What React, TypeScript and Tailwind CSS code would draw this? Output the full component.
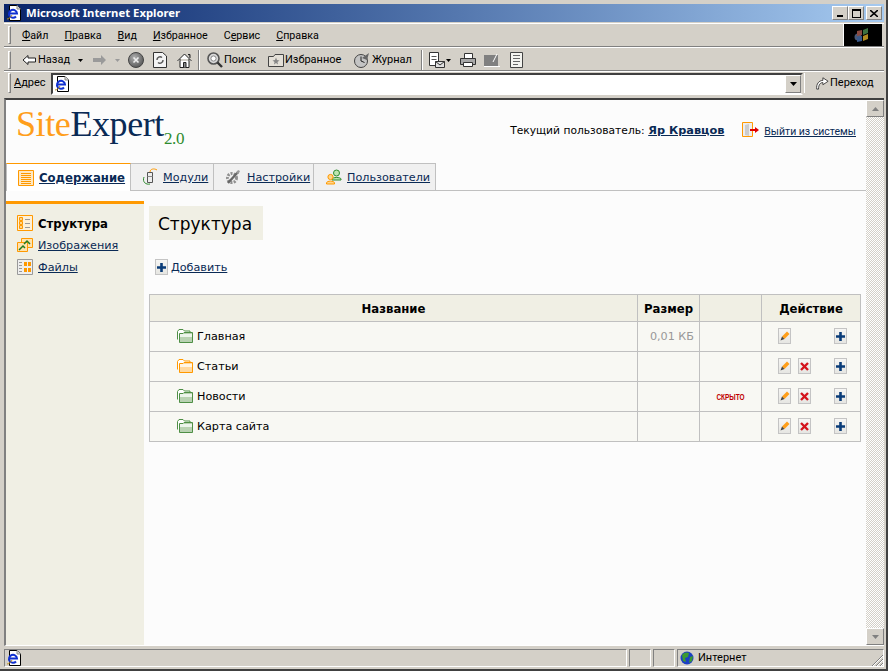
import type { ReactNode } from "react";

const ui = "font-['Roboto',sans-serif] text-[11px] leading-[14px] text-black";
const page = "font-['DejaVu_Sans',sans-serif]";

const raised = "border border-t-white border-l-white border-r-[#808080] border-b-[#808080]";
const sunken = "border border-t-[#808080] border-l-[#808080] border-r-white border-b-white";

function IeDoc({ className = "" }: { className?: string }) {
  return (
    <svg viewBox="0 0 16 16" width="16" height="16" className={className}>
      <path d="M3.5 .5H11L14.5 4V15.5H3.5Z" fill="#fff" stroke="#000" />
      <path d="M11 .5V4H14.5" fill="#ddd" stroke="#888" />
      <path d="M3 8.5H11A4 4 0 1 0 10 11.5" fill="none" stroke="#1030d0" strokeWidth="2" />
      <path d="M1 14C3 14 5 12 6 10" fill="none" stroke="#c09020" strokeWidth="1" />
    </svg>
  );
}

function Grip() {
  return <div className={`mr-[8px] h-full w-[3px] shrink-0 ${raised}`} />;
}

function Underlined({ text, at }: { text: string; at: number }) {
  return (
    <>
      {text.slice(0, at)}
      <span className="underline">{text[at]}</span>
      {text.slice(at + 1)}
    </>
  );
}

function MenuBar() {
  const items = [
    ["Файл", 0],
    ["Правка", 0],
    ["Вид", 0],
    ["Избранное", 0],
    ["Сервис", 1],
    ["Справка", 0],
  ] as const;
  return (
    <div className="flex h-[24px] items-stretch border-b border-b-[#808080] border-t border-t-white pr-[2px]">
      <div className="flex flex-1 items-center py-[2px] pl-[4px]">
        <Grip />
        <div className="ml-[3px] mt-[2px] flex gap-[16px]">
          {items.map(([label, at]) => (
            <span key={label} className="font-['Roboto',sans-serif] text-[10.7px] leading-[14px] text-black">
              <Underlined text={label} at={at} />
            </span>
          ))}
        </div>
      </div>
      <div className="flex w-[39px] items-center justify-center border-l border-l-white bg-black">
        <svg viewBox="0 0 18 16" width="18" height="16">
          <circle cx="4" cy="10" r="3.5" fill="#4a5a78" />
          <path d="M3 4L8 3V8L3 9Z" fill="#8a4a40" />
          <path d="M9 3L14 1V6L9 8Z" fill="#3c7040" />
          <path d="M3 10L8 9V14L3 15Z" fill="#38588a" />
          <path d="M9 9L14 7V12L9 14Z" fill="#b08a20" />
        </svg>
      </div>
    </div>
  );
}

function ToolSep({ className = "" }: { className?: string }) {
  return <div className={`h-[20px] w-[2px] shrink-0 border-l border-l-[#808080] border-r border-r-white ${className}`} />;
}

function Caret({ color = "#000", className = "" }: { color?: string; className?: string }) {
  return (
    <svg viewBox="0 0 5 3" width="5" height="3" className={`shrink-0 ${className}`}>
      <path d="M0 0H5L2.5 3Z" fill={color} />
    </svg>
  );
}

function ToolBar() {
  return (
    <div className="flex h-[24px] items-center border-b border-b-[#808080] border-t border-t-white pb-[1px] pl-[4px] pt-[3px]">
      <Grip />
      <svg viewBox="0 0 14 12" width="14" height="12" className="ml-[3px] shrink-0">
        <path d="M1 6L6 1.5V4H13.5V8H6V10.5Z" fill="#fff" stroke="#222" />
      </svg>
      <span className={`${ui} ml-[2px] w-[31px]`}>Назад</span>
      <Caret className="ml-[9px]" />
      <svg viewBox="0 0 13 12" width="13" height="12" className="ml-[10px] shrink-0">
        <path d="M13 6L8 1V4H0V8H8V11Z" fill="#9a9a9a" />
      </svg>
      <Caret color="#9a9a9a" className="ml-[9px]" />
      <svg viewBox="0 0 16 16" width="16" height="16" className="ml-[8px] shrink-0">
        <defs>
          <radialGradient id="stopFill" cx="40%" cy="35%" r="70%">
            <stop offset="0%" stopColor="#b0b0b0" />
            <stop offset="100%" stopColor="#555" />
          </radialGradient>
        </defs>
        <circle cx="8" cy="8" r="7.5" fill="url(#stopFill)" stroke="#444" />
        <path d="M5.5 5.5L10.5 10.5M10.5 5.5L5.5 10.5" stroke="#eee" strokeWidth="1.6" />
      </svg>
      <svg viewBox="0 0 14 16" width="14" height="16" className="ml-[9px] shrink-0">
        <path d="M.5 .5H9.5L13.5 4V15.5H.5Z" fill="#f4f4f4" stroke="#333" />
        <path d="M4 8A3 3 0 0 1 9 5.5M10 8A3 3 0 0 1 5 10.5" fill="none" stroke="#555" strokeWidth="1.4" />
      </svg>
      <svg viewBox="0 0 15 15" width="15" height="15" className="ml-[10px] shrink-0">
        <path d="M.5 8L7.5 1L14.5 8M3 6V14.5H12V6" fill="#fff" stroke="#222" />
        <path d="M6.5 14.5V9.5H9V14.5" fill="#888" stroke="#222" />
        <path d="M11 1.5H13V5" fill="#888" stroke="#222" />
      </svg>
      <ToolSep className="ml-[6px]" />
      <svg viewBox="0 0 16 16" width="16" height="16" className="ml-[7px] shrink-0">
        <circle cx="6.5" cy="6.5" r="5.5" fill="#d8d8d8" stroke="#555" strokeWidth="1.6" />
        <circle cx="6.5" cy="6.5" r="2.6" fill="#fff" stroke="#888" />
        <path d="M10.5 10.5L15 15" stroke="#333" strokeWidth="2.4" />
      </svg>
      <span className={`${ui} ml-[1px] w-[31px]`}>Поиск</span>
      <svg viewBox="0 0 16 14" width="16" height="14" className="ml-[13px] shrink-0">
        <path d="M.5 3.5V13.5H15.5V1.5H7L5.5 3.5Z" fill="#e4e0d8" stroke="#444" />
        <path d="M8 4.5L9 7L11.5 7.5L9.5 9L10 11.5L8 10L6 11.5L6.5 9L4.5 7.5L7 7Z" fill="#888" />
      </svg>
      <span className={`${ui} ml-[1px] w-[55px]`}>Избранное</span>
      <svg viewBox="0 0 18 16" width="18" height="16" className="ml-[13px] shrink-0">
        <circle cx="8" cy="9" r="6.5" fill="#c4c4c4" stroke="#444" />
        <path d="M8 4.5V9L11.5 10.5" fill="none" stroke="#222" />
        <path d="M9 6L16 1L14 8Z" fill="#666" />
      </svg>
      <span className={`${ui} ml-[1px] w-[39px]`}>Журнал</span>
      <ToolSep className="ml-[10px]" />
      <svg viewBox="0 0 16 16" width="16" height="16" className="ml-[6px] shrink-0">
        <path d="M.5 .5H9.5V13.5H.5Z" fill="#fff" stroke="#333" />
        <path d="M2.5 4.5H7.5M2.5 7.5H7.5" stroke="#555" />
        <path d="M6.5 9.5H15.5V15.5H6.5Z" fill="#e0e0e0" stroke="#333" />
        <path d="M6.5 9.5L11 13L15.5 9.5" fill="none" stroke="#333" />
      </svg>
      <Caret className="ml-[1px]" />
      <svg viewBox="0 0 16 16" width="16" height="16" className="ml-[9px] shrink-0">
        <path d="M4.5 6V1.5H12.5V6" fill="#fff" stroke="#333" />
        <path d="M.5 6.5H15.5V12.5H.5Z" fill="#a8a8a8" stroke="#333" />
        <path d="M3.5 10.5H12.5V14.5H3.5Z" fill="#fff" stroke="#333" />
      </svg>
      <svg viewBox="0 0 16 14" width="16" height="14" className="ml-[8px] shrink-0">
        <path d="M0 2H14V14H0Z" fill="#808080" />
        <path d="M0 13H16V14H0Z" fill="#fff" />
        <path d="M9 9L13 1" stroke="#fff" />
      </svg>
      <svg viewBox="0 0 15 16" width="15" height="16" className="ml-[9px] shrink-0">
        <path d="M1.5 .5H13.5V15.5H1.5Z" fill="#f4f4f0" stroke="#444" />
        <path d="M4 3.5H11M4 6.5H11M4 9.5H11M4 12.5H9" stroke="#666" />
      </svg>
    </div>
  );
}

function AddressBar() {
  return (
    <div className="flex h-[27px] items-start border-t border-t-white pl-[4px]">
      <div className="mt-[1px] h-[20px]"><Grip /></div>
      <span className={`${ui} -ml-[5px] mt-[4px] w-[32px]`}>
        <Underlined text="Адрес" at={0} />
      </span>
      <div className="ml-[5px] mt-[1px] flex h-[22px] flex-1 items-center border-2 border-t-[#404040] border-l-[#404040] border-r-[#d4d0c8] border-b-white bg-white">
        <IeDoc className="ml-[1px]" />
        <div className="flex-1" />
        <div className={`flex h-[18px] w-[16px] items-center justify-center bg-[#d4d0c8] ${raised}`}>
          <svg viewBox="0 0 7 4" width="7" height="4"><path d="M0 0H7L3.5 4Z" fill="#000" /></svg>
        </div>
      </div>
      <div className="ml-[1px] mt-[1px] flex h-[20px] w-[80px] items-center gap-[1px] border-l border-l-white pl-[10px]">
        <svg viewBox="0 0 16 16" width="14" height="16" className="shrink-0">
          <path d="M2 15C1 9 5 5 9 5V2L15 6L9 10V7.5C6 7.5 4 10 4 15Z" fill="#fff" stroke="#333" />
        </svg>
        <span className={ui}>Переход</span>
      </div>
    </div>
  );
}

function ListIcon() {
  return (
    <svg viewBox="0 0 16 16" width="16" height="16" className="shrink-0">
      <path d="M.5 .5H15.5V15.5H.5Z" fill="#ffe9c4" stroke="#ff9900" />
      <path d="M3 3.5H13M3 5.5H13M3 7.5H13M3 9.5H13M3 11.5H13M3 13.5H13" stroke="#ff9900" />
    </svg>
  );
}

function PlugIcon() {
  return (
    <svg viewBox="0 0 16 18" width="16" height="18" className="shrink-0">
      <path d="M5.5 4.5H10.5V14.5H5.5Z" fill="#eee" stroke="#555" />
      <path d="M5.5 8.5H10.5" stroke="#888" />
      <path d="M8 4C8 1 12 0 15 2" fill="none" stroke="#ff9900" />
      <path d="M2 9C0 14 4 17 8 16" fill="none" stroke="#2e8b2e" />
    </svg>
  );
}

function GearIcon() {
  return (
    <svg viewBox="0 0 16 16" width="16" height="16" className="shrink-0">
      <circle cx="7" cy="9" r="4.5" fill="none" stroke="#909090" strokeWidth="3" strokeDasharray="2 1.2" />
      <path d="M3 14L13 3" stroke="#666" strokeWidth="2.4" />
      <path d="M11 4L13 1L15 2L13.5 5Z" fill="#999" />
    </svg>
  );
}

function UsersIcon() {
  return (
    <svg viewBox="0 0 16 16" width="16" height="16" className="shrink-0">
      <circle cx="10.5" cy="4" r="3" fill="#bfe6b0" stroke="#2e8b2e" />
      <path d="M6 10C6 8 15 8 15 10V11H6Z" fill="#bfe6b0" stroke="#2e8b2e" />
      <circle cx="4.5" cy="8" r="2.6" fill="#ffd58a" stroke="#ff9900" />
      <path d="M.5 14C.5 11.5 8.5 11.5 8.5 14V15H.5Z" fill="#ffd58a" stroke="#ff9900" />
    </svg>
  );
}

function TreeIcon() {
  return (
    <svg viewBox="0 0 16 16" width="16" height="16" className="shrink-0">
      <path d="M.5 .5H15.5V15.5H.5Z" fill="#fdf0d8" stroke="#ff9900" />
      <path d="M2.5 2.5H5.5V5.5H2.5ZM2.5 6.5H5.5V9.5H2.5ZM2.5 10.5H5.5V13.5H2.5Z" fill="#ffd58a" stroke="#ff9900" />
      <path d="M8 4.5H13M8 8.5H13M8 12.5H13" stroke="#999" />
    </svg>
  );
}

function ImagesIcon() {
  return (
    <svg viewBox="0 0 16 14" width="16" height="14" className="shrink-0">
      <path d="M4.5 .5H15.5V9.5H4.5Z" fill="#ffe2ac" stroke="#ff9900" />
      <path d="M.5 4.5H10.5V13.5H.5Z" fill="#ffe2ac" stroke="#ff9900" />
      <path d="M2 12L6 8L8 10M7 6L10 3L13 6" fill="none" stroke="#1f7a1f" strokeWidth="1.5" />
    </svg>
  );
}

function FilesIcon() {
  return (
    <svg viewBox="0 0 16 16" width="16" height="16" className="shrink-0">
      <path d="M.5 .5H15.5V15.5H.5Z" fill="#eee" stroke="#999" />
      <path d="M2 3.5H5M2 6.5H5M2 9.5H5M2 12.5H5" stroke="#999" />
      <path d="M7 3H10V7H7ZM11 3H14V7H11ZM7 9H10V13H7ZM11 9H14V13H11Z" fill="#ff9900" />
    </svg>
  );
}

function Folder({ orange = false }: { orange?: boolean }) {
  const line = orange ? "#ff9900" : "#4f8f45";
  const fill = orange ? "#ffd9a0" : "#b9d2b2";
  return (
    <svg viewBox="0 0 16 14" width="16" height="14" className="shrink-0">
      <path d="M.5 10.5V2.5L2 .5H6L7.5 2H13V4" fill="#fff" stroke={line} />
      <path d="M2.5 13.5V4.5H6L7 3.5H15.5V13.5Z" fill={fill} stroke={line} />
      <path d="M3 5H15V8H3Z" fill="#fff" fillOpacity=".75" />
    </svg>
  );
}

function Square({ children }: { children: ReactNode }) {
  return (
    <span className="flex h-[16px] w-[13px] items-center justify-center border border-[#c4c4c4] bg-gradient-to-b from-[#f6f6f4] to-[#e6e6e2]">
      {children}
    </span>
  );
}

function Plus() {
  return (
    <svg viewBox="0 0 9 9" width="9" height="9">
      <path d="M4.5 0V9M0 4.5H9" stroke="#0a3c78" strokeWidth="2.6" />
    </svg>
  );
}

function Pencil() {
  return (
    <svg viewBox="0 0 10 10" width="10" height="10">
      <path d="M2 5.5L7 .5L9.5 3L4.5 8Z" fill="#ff9f1a" />
      <path d="M2 5.5L.5 9.5L4.5 8Z" fill="#444" />
    </svg>
  );
}

function Cross() {
  return (
    <svg viewBox="0 0 9 9" width="9" height="9">
      <path d="M1 1L8 8M8 1L1 8" stroke="#d4141c" strokeWidth="2.4" />
    </svg>
  );
}

const tabs = [
  { label: "Содержание", icon: <ListIcon />, active: true, box: "w-[125px] pl-[11px] gap-[5px]" },
  { label: "Модули", icon: <PlugIcon />, box: "w-[83px] pl-[11px] gap-[5px]" },
  { label: "Настройки", icon: <GearIcon />, box: "w-[100px] pl-[11px] gap-[6px]" },
  { label: "Пользователи", icon: <UsersIcon />, box: "w-[122px] pl-[12px] gap-[5px]" },
];

function Tab({ icon, label, active = false, box }: { icon: ReactNode; label: string; active?: boolean; box: string }) {
  return (
    <div
      className={
        active
          ? `-mb-px flex h-[28px] items-center border-x border-x-[#c0c0c0] border-t border-t-[#ff9900] bg-white ${box}`
          : `flex h-[27px] items-center border-r border-t border-[#c0c0c0] bg-[#f0f0f0] ${box}`
      }
    >
      {icon}
      <a className={`mt-[2px] whitespace-nowrap text-[#0a2a55] underline ${active ? "text-[11.7px] font-bold" : "text-[11.2px]"}`}>{label}</a>
    </div>
  );
}

const rows = [
  { name: "Главная", size: "0,01 КБ", canDelete: false },
  { name: "Статьи", orange: true, canDelete: true },
  { name: "Новости", hidden: true, canDelete: true },
  { name: "Карта сайта", canDelete: true },
];

function StructureTable() {
  const cell = "border border-[#c0c0c0]";
  return (
    <table className="w-full table-fixed border-collapse text-[11.2px]">
      <colgroup>
        <col />
        <col className="w-[62px]" />
        <col className="w-[62px]" />
        <col className="w-[99px]" />
      </colgroup>
      <thead>
        <tr className="h-[27px] bg-[#f0efe4] text-center text-[11.7px] text-black">
          <th className={`${cell} pt-[3px] font-bold`}>Название</th>
          <th className={`${cell} pt-[3px] font-bold`}>Размер</th>
          <th className={cell} />
          <th className={`${cell} pt-[3px] font-bold`}>Действие</th>
        </tr>
      </thead>
      <tbody>
        {rows.map((row) => (
          <tr key={row.name} className="h-[30px] bg-[#f8f8f3]">
            <td className={cell}>
              <div className="flex items-center gap-[4px] pl-[27px]">
                <Folder orange={row.orange} />
                <span className="mt-[2px]">{row.name}</span>
              </div>
            </td>
            <td className={`${cell} pr-[5px] pt-[2px] text-right text-[#999]`}>{row.size}</td>
            <td className={`${cell} text-center font-['Liberation_Sans',sans-serif] text-[6.5px] font-bold text-[#c00000]`}>
              {row.hidden && <span className="inline-block scale-y-125">СКРЫТО</span>}
            </td>
            <td className={cell}>
              <div className="-mt-[1px] flex items-center pl-[16px] pr-[13px]">
                <Square><Pencil /></Square>
                {row.canDelete && <span className="ml-[7px]"><Square><Cross /></Square></span>}
                <span className="ml-auto"><Square><Plus /></Square></span>
              </div>
            </td>
          </tr>
        ))}
      </tbody>
    </table>
  );
}

function Site() {
  return (
    <div className={`${page} flex min-w-0 flex-1 flex-col bg-[#fcfcfc] text-[11.2px] text-black`}>
      <header className="flex h-[61px] justify-between pl-[10px] pr-[10px]">
        <div className="flex items-start pt-[2px] font-['Liberation_Serif',serif] text-[36px] leading-[44px] tracking-[-0.4px]">
          <span className="text-[#ff9e1b]">Site</span>
          <span className="text-[#0a2a55]">Expert</span>
          <span className="mt-[12px] text-[17px] leading-[50px] text-[#2e8b2e]">2.0</span>
        </div>
        <div className="flex items-center gap-[18px] self-start pt-[23px]">
          <span>
            <span className="text-[10.7px]">Текущий пользователь:</span>{" "}
            <a className="text-[11.3px] font-bold text-[#0a2a55] underline">Яр Кравцов</a>
          </span>
          <div className="flex items-center gap-[5px]">
            <svg viewBox="0 0 17 16" width="17" height="16" className="-mt-[2px] shrink-0">
              <path d="M.5 .5H10.5V14.5H.5Z" fill="#eee" stroke="#ff9900" />
              <path d="M3 3L7 2V14L3 13Z" fill="#ccc" />
              <path d="M8 8H14" stroke="#e00000" strokeWidth="2" />
              <path d="M13 5L17 8L13 11Z" fill="#e00000" />
            </svg>
            <a className="font-['Roboto',sans-serif] text-[10.5px] text-[#0a2a55] underline">Выйти из системы</a>
          </div>
        </div>
      </header>

      <nav className="flex h-[30px] items-end border-b border-b-[#c0c0c0]">
        {tabs.map((tab) => (
          <Tab key={tab.label} {...tab} />
        ))}
      </nav>

      <div className="mt-[10px] flex min-h-0 flex-1">
        <aside className="flex w-[138px] shrink-0 flex-col gap-[6px] border-t-[3px] border-t-[#ff9900] bg-[#f0efe4] pl-[11px] pt-[11px]">
          <div className="flex h-[16px] items-center gap-[5px]">
            <TreeIcon />
            <span className="mt-[3px] text-[11.7px] font-bold">Структура</span>
          </div>
          <div className="flex h-[16px] items-center gap-[5px]">
            <ImagesIcon />
            <a className="mt-[3px] text-[#0a2a55] underline">Изображения</a>
          </div>
          <div className="flex h-[16px] items-center gap-[5px]">
            <FilesIcon />
            <a className="mt-[3px] text-[#0a2a55] underline">Файлы</a>
          </div>
        </aside>

        <main className="min-w-0 flex-1 pl-[5px] pr-[5px] pt-[5px]">
          <h1 className="inline-block h-[34px] bg-[#f0efe4] pl-[9px] pr-[11px] align-top text-[17px] leading-[36px] text-black">Структура</h1>
          <div className="mt-[19px] flex h-[16px] items-center gap-[3px] pl-[6px]">
            <Square><Plus /></Square>
            <a className="mt-[2px] text-[#0a2a55] underline">Добавить</a>
          </div>
          <div className="mt-[19px]">
            <StructureTable />
          </div>
        </main>
      </div>
    </div>
  );
}

function ScrollBar() {
  return (
    <div className="flex w-[18px] shrink-0 flex-col bg-[repeating-conic-gradient(#d4d0c8_0_25%,#fff_0_50%)] bg-[length:2px_2px]">
      <div className={`flex h-[17px] items-center justify-center bg-[#d4d0c8] ${raised}`}>
        <svg viewBox="0 0 7 4" width="7" height="4"><path d="M0 4H7L3.5 0Z" fill="#808080" /></svg>
      </div>
      <div className="flex-1" />
      <div className={`flex h-[17px] items-center justify-center bg-[#d4d0c8] ${raised}`}>
        <svg viewBox="0 0 7 4" width="7" height="4"><path d="M0 0H7L3.5 4Z" fill="#808080" /></svg>
      </div>
    </div>
  );
}

function StatusBar() {
  const pane = `${sunken} h-[18px]`;
  return (
    <div className="flex h-[22px] items-center gap-[2px] pt-[2px]">
      <div className={`${pane} flex flex-1 items-center`}>
        <IeDoc className="ml-[1px]" />
      </div>
      <div className={`${pane} w-[22px]`} />
      <div className={`${pane} w-[22px]`} />
      <div className={`${pane} relative flex w-[207px] items-center gap-[4px] pl-[2px]`}>
        <svg viewBox="0 0 14 14" width="14" height="14" className="shrink-0">
          <circle cx="7" cy="7" r="6.5" fill="#1c3fc4" />
          <path d="M2 4C4 1 7 1 9 2L8 6L5 7L6 11L3 10ZM10 6L13 5L12 10L9 12Z" fill="#3c9a30" />
        </svg>
        <span className={ui}>Интернет</span>
        <svg viewBox="0 0 12 12" width="12" height="12" className="absolute bottom-0 right-0">
          <path d="M1 12L12 1M5 12L12 5M9 12L12 9" stroke="#808080" />
          <path d="M2 12L12 2M6 12L12 6M10 12L12 10" stroke="#fff" />
        </svg>
      </div>
    </div>
  );
}

export default function App() {
  return (
    <div className="flex h-[671px] w-[888px] flex-col border-b-2 border-r-2 border-b-[#404040] border-r-[#404040] bg-[#d4d0c8] pl-[4px] pr-[2px] pt-[4px] pb-[1px]">
      <div className="flex h-[18px] shrink-0 items-center bg-gradient-to-r from-[#0a246a] to-[#a6caf0] pr-[2px]">
        <IeDoc className="ml-[2px]" />
        <span className="ml-[4px] flex-1 font-['Noto_Sans',sans-serif] text-[11.3px] font-bold text-white">
          Microsoft Internet Explorer
        </span>
        <div className="flex">
          <span className={`flex h-[14px] w-[16px] items-end justify-center bg-[#d4d0c8] pb-[2px] ${raised}`}>
            <span className="h-[2px] w-[6px] bg-black" />
          </span>
          <span className={`flex h-[14px] w-[16px] items-center justify-center bg-[#d4d0c8] ${raised}`}>
            <span className="h-[9px] w-[9px] border border-t-2 border-black" />
          </span>
          <span className={`ml-[2px] flex h-[14px] w-[16px] items-center justify-center bg-[#d4d0c8] ${raised}`}>
            <svg viewBox="0 0 8 7" width="8" height="7"><path d="M0 0L8 7M8 0L0 7" stroke="#000" strokeWidth="1.6" /></svg>
          </span>
        </div>
      </div>
      <div className="mt-[1px] flex min-h-0 flex-1 flex-col">
        <MenuBar />
        <ToolBar />
        <AddressBar />
        <div className="flex min-h-0 flex-1 border-b border-l-2 border-t-2 border-b-white border-l-[#808080] border-t-[#404040]">
          <Site />
          <ScrollBar />
        </div>
        <StatusBar />
      </div>
    </div>
  );
}
